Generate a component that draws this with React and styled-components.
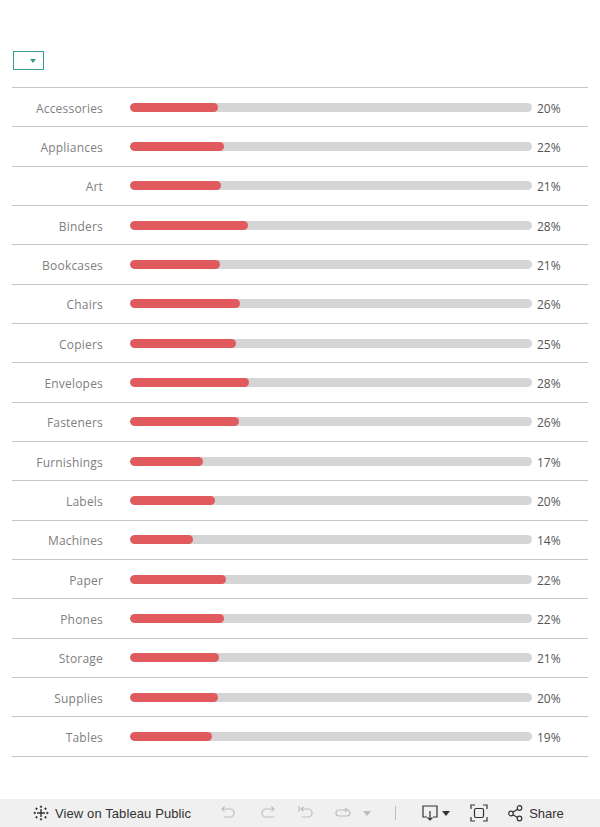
import React from "react";
import styled, { createGlobalStyle } from "styled-components";

const Global = createGlobalStyle`
  html, body { margin: 0; padding: 0; background: #fff; }
  body { width: 600px; height: 827px; overflow: hidden; }
`;

const Page = styled.div`
  width: 600px;
  height: 827px;
  display: flex;
  flex-direction: column;
  font-family: "Open Sans", "Noto Sans", sans-serif;
`;

const Content = styled.div`
  flex: 1;
  padding: 51px 12px 0 12px;
`;

const Dropdown = styled.div`
  height: 17px;
  margin-left: 1px;
  border: 1px solid #3a9b92;
  display: flex;
  align-items: center;
  justify-content: flex-end;
  padding-right: 7px;
  box-sizing: content-box;
  width: 22px;
`;

const Caret = styled.span`
  width: 0;
  height: 0;
  border-left: 3px solid transparent;
  border-right: 3px solid transparent;
  border-top: 4px solid #3a9b92;
  margin-top: 1px;
`;

const Table = styled.div`
  margin-top: 17px;
  border-top: 1px solid #c4c4c4;
  width: 576px;
`;

const Row = styled.div`
  height: 38.33px;
  border-bottom: 1px solid #c4c4c4;
  display: grid;
  grid-template-columns: 91px 27px 402px 1fr;
  align-items: center;
`;

const Label = styled.span`
  text-align: right;
  font-size: 12px;
  color: #808080;
  letter-spacing: 0.2px;
  padding-top: 2px;
`;

const Track = styled.div`
  grid-column: 3;
  height: 9px;
  border-radius: 5px;
  background: #d5d5d5;
  overflow: hidden;
`;

const Fill = styled.div`
  height: 100%;
  border-radius: 5px;
  background: #e15a5d;
`;

const Pct = styled.span`
  font-size: 12px;
  color: #555;
  padding-left: 5px;
  padding-top: 2px;
`;

const Toolbar = styled.div`
  height: 28px;
  background: #f0f0f0;
  display: flex;
  align-items: center;
  font-family: "Liberation Sans", Arial, sans-serif;
  font-size: 13px;
  color: #333;
`;

const Brand = styled.div`
  display: flex;
  align-items: center;
  gap: 6px;
  margin-left: 33px;
  font-weight: 500;
  letter-spacing: 0.1px;
`;

const IconBtn = styled.div`
  display: flex;
  align-items: center;
  justify-content: center;
  margin-left: ${(p) => p.$ml}px;
  color: ${(p) => (p.$dim ? "#bdbdbd" : "#333")};
  gap: ${(p) => p.$gap ?? 4}px;
`;

const Sep = styled.div`
  width: 1px;
  height: 14px;
  background: #bdbdbd;
  margin-left: 24px;
`;

const TinyCaret = styled.span`
  width: 0;
  height: 0;
  border-left: 4px solid transparent;
  border-right: 4px solid transparent;
  border-top: 5px solid currentColor;
`;

const data = [
  ["Accessories", 218, "20%"],
  ["Appliances", 224, "22%"],
  ["Art", 221, "21%"],
  ["Binders", 248, "28%"],
  ["Bookcases", 220, "21%"],
  ["Chairs", 240, "26%"],
  ["Copiers", 236, "25%"],
  ["Envelopes", 249, "28%"],
  ["Fasteners", 239, "26%"],
  ["Furnishings", 203, "17%"],
  ["Labels", 215, "20%"],
  ["Machines", 193, "14%"],
  ["Paper", 226, "22%"],
  ["Phones", 224, "22%"],
  ["Storage", 219, "21%"],
  ["Supplies", 218, "20%"],
  ["Tables", 212, "19%"],
];

const TableauLogo = () => (
  <svg width="16" height="16" viewBox="0 0 16 16" stroke="#333" strokeWidth="1" fill="none">
    <path d="M8 4v8M4 8h8" strokeWidth="1.4" />
    <path d="M8 0.5v2.5M6.8 1.75h2.4" />
    <path d="M8 13v2.5M6.8 14.25h2.4" />
    <path d="M0.5 8h2.5M1.75 6.8v2.4" />
    <path d="M13 8h2.5M14.25 6.8v2.4" />
    <path d="M3.5 2.5v2.4M2.3 3.7h2.4" />
    <path d="M12.5 2.5v2.4M11.3 3.7h2.4" />
    <path d="M3.5 11.1v2.4M2.3 12.3h2.4" />
    <path d="M12.5 11.1v2.4M11.3 12.3h2.4" />
  </svg>
);

export default function App() {
  return (
    <Page>
      <Global />
      <Content>
        <Dropdown>
          <Caret />
        </Dropdown>
        <Table>
          {data.map(([name, end, pct]) => (
            <Row key={name}>
              <Label>{name}</Label>
              <Track>
                <Fill style={{ width: end - 130 + "px" }} />
              </Track>
              <Pct>{pct}</Pct>
            </Row>
          ))}
        </Table>
      </Content>
      <Toolbar>
        <Brand>
          <TableauLogo />
          <span>View on Tableau Public</span>
        </Brand>
        <IconBtn $ml={28} $dim>
          <svg width="18" height="16" viewBox="0 0 18 16" fill="none" stroke="currentColor" strokeWidth="1.2">
            <path d="M3 4h8a4 4 0 0 1 0 8H5" />
            <path d="M5.5 1.8L3 4l2.5 2.2" />
          </svg>
        </IconBtn>
        <IconBtn $ml={22} $dim>
          <svg width="18" height="16" viewBox="0 0 18 16" fill="none" stroke="currentColor" strokeWidth="1.2">
            <path d="M15 4H7a4 4 0 0 0 0 8h8" />
            <path d="M12.5 1.8L15 4l-2.5 2.2" />
          </svg>
        </IconBtn>
        <IconBtn $ml={20} $dim>
          <svg width="18" height="16" viewBox="0 0 18 16" fill="none" stroke="currentColor" strokeWidth="1.2">
            <path d="M2 1v6" />
            <path d="M4 4h7a4 4 0 0 1 0 8H5" />
            <path d="M6.5 1.8L4 4l2.5 2.2" />
          </svg>
        </IconBtn>
        <IconBtn $ml={18} $dim>
          <svg width="20" height="16" viewBox="0 0 20 16" fill="none" stroke="currentColor" strokeWidth="1.2">
            <path d="M14 5H6a3 3 0 0 0 0 6h8a3 3 0 0 0 0-6" />
            <path d="M12 3l2 2-2 2" />
          </svg>
        </IconBtn>
        <IconBtn $ml={10} $dim>
          <TinyCaret />
        </IconBtn>
        <Sep />
        <IconBtn $ml={25} $gap={3}>
          <svg width="18" height="18" viewBox="0 0 18 18" fill="none" stroke="#333" strokeWidth="1.2">
            <path d="M6 13H2V2h14v11h-4" />
            <path d="M9 7v9M6.5 13.5L9 16l2.5-2.5" />
          </svg>
          <TinyCaret />
        </IconBtn>
        <IconBtn $ml={20}>
          <svg width="18" height="18" viewBox="0 0 18 18" fill="none" stroke="#333" strokeWidth="1.2">
            <path d="M1 5V1h4M13 1h4v4M17 13v4h-4M5 17H1v-4" />
            <rect x="4.5" y="4.5" width="9" height="9" rx="1.5" />
          </svg>
        </IconBtn>
        <IconBtn $ml={19}>
          <svg width="18" height="18" viewBox="0 0 18 18" fill="none" stroke="#333" strokeWidth="1.2">
            <circle cx="4" cy="9.5" r="2.3" />
            <circle cx="12.5" cy="4" r="2.3" />
            <circle cx="12.5" cy="14.5" r="2.3" />
            <path d="M6 8.3l4.5-3M6 10.8l4.5 2.6" />
          </svg>
          <span>Share</span>
        </IconBtn>
      </Toolbar>
    </Page>
  );
}
